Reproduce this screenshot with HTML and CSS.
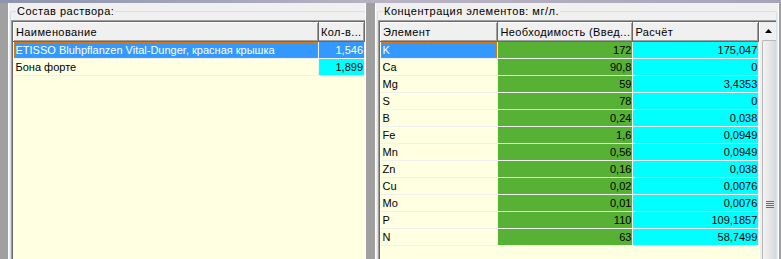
FILE: index.html
```html
<!DOCTYPE html>
<html lang="ru">
<head>
    <meta charset="UTF-8">
    <title>Состав раствора</title>
    <link rel="stylesheet" href="styles.css">
</head>
<body>
    <div class="topbar"></div>
    <div class="panes">
        <div class="pane pane-left">
            <fieldset class="group">
                <legend>Состав раствора:</legend>
                <div class="grid grid-left">
                    <table>
                        <colgroup>
                            <col class="c-name">
                            <col class="c-qty">
                        </colgroup>
                        <tr>
                            <th>Наименование</th>
                            <th>Кол-в...</th>
                        </tr>
                        <tr class="selected">
                            <td class="focus">ETISSO Bluhpflanzen Vital-Dunger, красная крышка</td>
                            <td class="num">1,546</td>
                        </tr>
                        <tr>
                            <td>Бона форте</td>
                            <td class="num calc">1,899</td>
                        </tr>
                    </table>
                </div>
            </fieldset>
        </div>
        <div class="splitter"></div>
        <div class="pane pane-right">
            <fieldset class="group">
                <legend>Концентрация элементов: мг/л.</legend>
                <div class="grid grid-right">
                    <table>
                        <colgroup>
                            <col class="c-el">
                            <col class="c-need">
                            <col class="c-calc">
                        </colgroup>
                        <tr>
                            <th>Элемент</th>
                            <th>Необходимость (Введ...</th>
                            <th>Расчёт</th>
                        </tr>
                        <tr class="selected">
                            <td class="focus">K</td>
                            <td class="num need">172</td>
                            <td class="num calc">175,047</td>
                        </tr>
                        <tr><td>Ca</td><td class="num need">90,8</td><td class="num calc">0</td></tr>
                        <tr><td>Mg</td><td class="num need">59</td><td class="num calc">3,4353</td></tr>
                        <tr><td>S</td><td class="num need">78</td><td class="num calc">0</td></tr>
                        <tr><td>B</td><td class="num need">0,24</td><td class="num calc">0,038</td></tr>
                        <tr><td>Fe</td><td class="num need">1,6</td><td class="num calc">0,0949</td></tr>
                        <tr><td>Mn</td><td class="num need">0,56</td><td class="num calc">0,0949</td></tr>
                        <tr><td>Zn</td><td class="num need">0,16</td><td class="num calc">0,038</td></tr>
                        <tr><td>Cu</td><td class="num need">0,02</td><td class="num calc">0,0076</td></tr>
                        <tr><td>Mo</td><td class="num need">0,01</td><td class="num calc">0,0076</td></tr>
                        <tr><td>P</td><td class="num need">110</td><td class="num calc">109,1857</td></tr>
                        <tr><td>N</td><td class="num need">63</td><td class="num calc">58,7499</td></tr>
                    </table>
                    <div class="scrollbar">
                        <div class="sb-btn">
                            <svg width="7" height="4" viewBox="0 0 7 4"><path d="M0 4 L3.5 0 L7 4 Z" fill="#000"/></svg>
                        </div>
                        <div class="sb-thumb">
                            <div class="grip"></div>
                        </div>
                    </div>
                </div>
            </fieldset>
        </div>
    </div>
</body>
</html>
```

FILE: styles.css
```css
body {
    margin: 0;
    background-color: #a0a0a0;
    font-family: "Liberation Sans", Arial, sans-serif;
    font-size: 11px;
    color: #000;
    width: 781px;
    height: 259px;
    overflow: hidden;
}

.topbar {
    height: 3px;
    background: linear-gradient(to right, #8e94ac, #b8b4c4 50%, #a8a4b8);
}

.panes {
    display: flex;
    height: 256px;
}

.pane {
    background-color: #f0f0f0;
    border-left: 1px solid #fff;
    border-right: 1px solid #fff;
    box-sizing: border-box;
    overflow: hidden;
}

.pane-left {
    margin-left: 8px;
    width: 358px;
}

.splitter {
    width: 9px;
}

.pane-right {
    width: 404px;
}

.group {
    margin: 0 2px 0 1px;
    padding: 0;
    border: 1px solid #d5dfe5;
    border-radius: 2px;
    height: 300px;
    position: relative;
    top: 2px;
}

.group legend {
    padding: 0 1px;
    margin-left: 5px;
    line-height: 12px;
    letter-spacing: 0.5px;
}

.grid {
    display: flex;
    margin-top: 3px;
    border-left: 1px solid #a0a0a0;
    border-top: 1px solid #a0a0a0;
    box-shadow: inset 1px 1px 0 #696969;
    padding: 1px 0 0 1px;
    background-color: #ffffe1;
    height: 260px;
    align-items: flex-start;
}

table {
    border-collapse: collapse;
    table-layout: fixed;
}

.grid-left {
    width: 352px;
}

.grid-right {
    width: 396px;
}

.c-name { width: 305px; }
.c-qty { width: 46px; }
.c-el { width: 121px; }
.c-need { width: 128px; }
.c-calc { width: 130px; }

th {
    height: 19px;
    padding: 0 2px;
    text-align: left;
    font-weight: normal;
    letter-spacing: 0.4px;
    background-color: #f0f0f0;
    border-top: 1px solid #fff;
    border-left: 1px solid #fff;
    border-right: 1px solid #696969;
    border-bottom: 1px solid #696969;
    box-shadow: inset -1px -1px 0 #a0a0a0;
    white-space: nowrap;
    overflow: hidden;
    box-sizing: border-box;
}

td {
    height: 17px;
    padding: 0 2px;
    border-right: 1px solid #f0f0f0;
    border-bottom: 1px solid #f0f0f0;
    white-space: nowrap;
    overflow: hidden;
    box-sizing: border-box;
    line-height: 15px;
}

td.num {
    text-align: right;
    padding-right: 1px;
}

td.need {
    background-color: #56b134;
}

td.calc {
    background-color: #00ffff;
}

.selected td {
    background-color: #3399ff;
    color: #fff;
}

.selected td.need {
    background-color: #56b134;
    color: #000;
}

.selected td.calc {
    background-color: #00ffff;
    color: #000;
}

.selected td.focus {
    box-shadow: inset 0 0 0 1px #d87818;
}

.scrollbar {
    width: 17px;
    background-color: #f0f0f0;
    border-left: 1px solid #fff;
    height: 260px;
    box-sizing: border-box;
}

.sb-btn {
    height: 18px;
    display: flex;
    align-items: center;
    justify-content: center;
    background-color: #f0f0f0;
}

.sb-thumb {
    margin-left: 2px;
    height: 240px;
    border: 1px solid #b8b8b8;
    border-right: none;
    border-radius: 2px 0 0 2px;
    background: linear-gradient(to right, #f4f4f4, #e6e6e6 50%, #d8d8d8);
    position: relative;
}

.grip {
    position: absolute;
    left: 3px;
    top: 160px;
    width: 8px;
    height: 7px;
    background: repeating-linear-gradient(to bottom, #6b6b6b 0 1px, #e8e8e8 1px 2px);
}
```
